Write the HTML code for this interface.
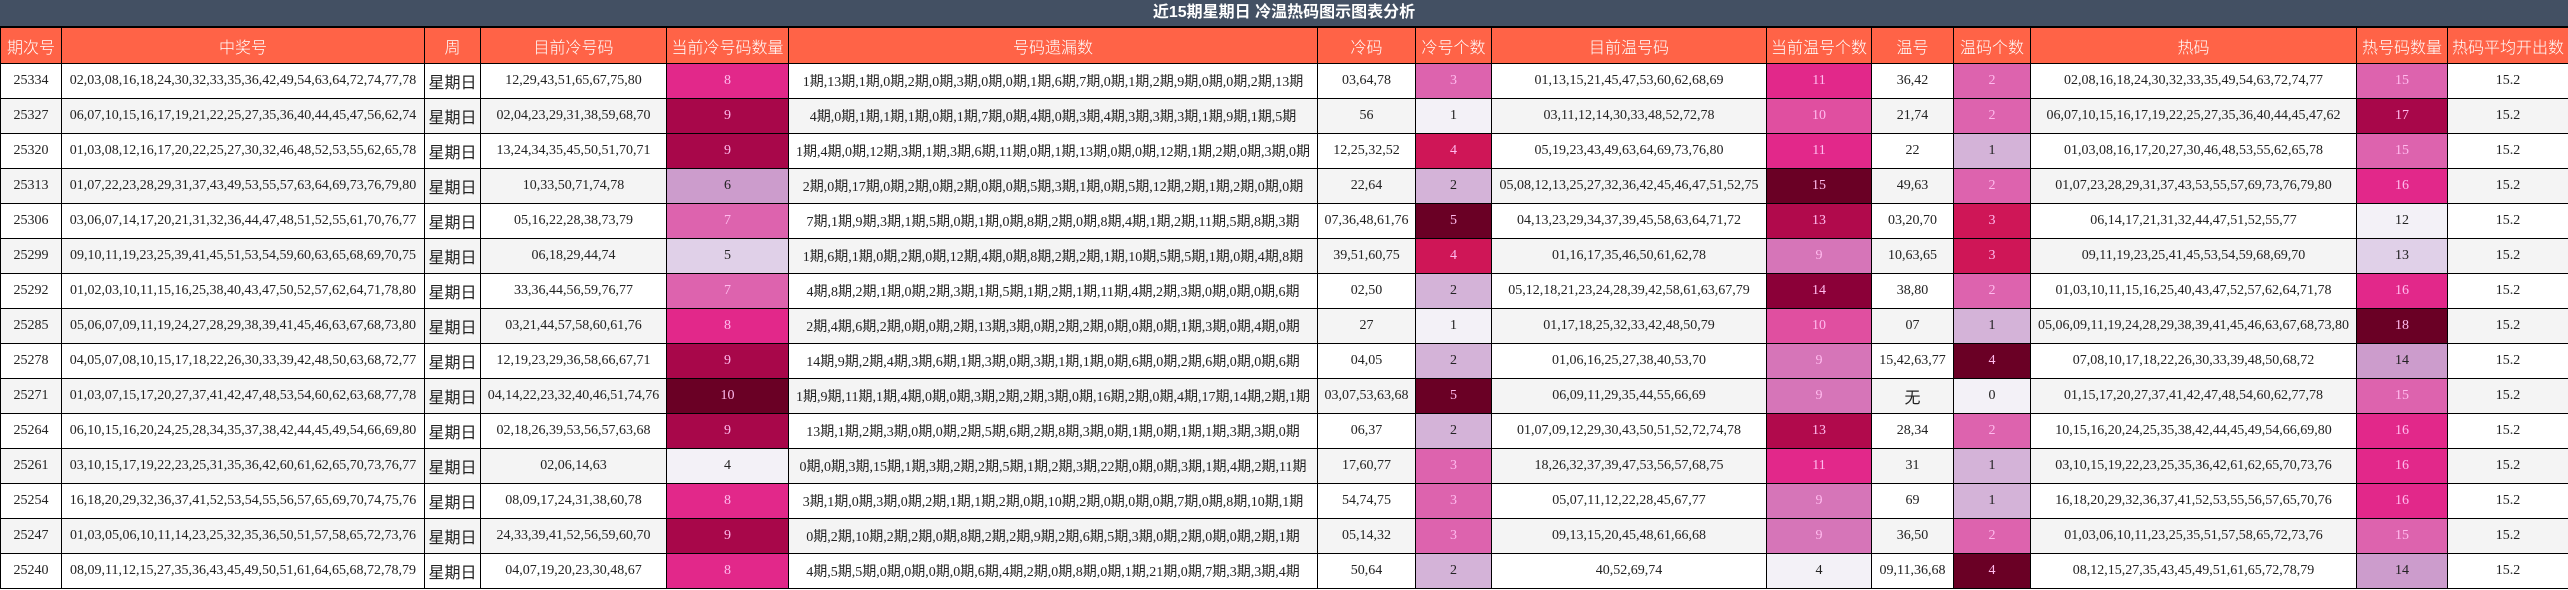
<!DOCTYPE html>
<html><head><meta charset="utf-8"><style>
html,body{margin:0;padding:0;width:2568px;height:590px;overflow:hidden;background:#fff}
.t{height:26px;background:#435063;border-bottom:2px solid #000;color:#fff;font:bold 16px "Liberation Sans","Noto Sans CJK SC",sans-serif;text-align:center;line-height:26px}
table{border-collapse:collapse;table-layout:fixed;width:2568px}
th{background:#ff6347;color:#fff;font:300 16px "Liberation Sans","Noto Sans CJK SC",sans-serif;height:35px;border:1px solid #000;border-top:none;padding:0;white-space:nowrap;overflow:hidden}
td{height:34px;border:1px solid #000;padding:0;text-align:center;font:14px "Liberation Serif","Noto Sans CJK SC",serif;color:#222;white-space:nowrap;overflow:hidden}
tr:nth-child(odd) td{background:#f4f4f4}
tr:nth-child(even) td{background:#fff}
td.w{font:16px "Liberation Sans","Noto Sans CJK SC",sans-serif}
tr td.A{background:#dd63ae;color:#fbe}
tr td.B{background:#f3f1f7;color:#222}
tr td.C{background:#cf1657;color:#fbe}
tr td.D{background:#d4b3d8;color:#222}
tr td.E{background:#6a0025;color:#fbe}
tr td.F{background:#e2288a;color:#fbe}
tr td.G{background:#e04fa0;color:#fbe}
tr td.H{background:#b10a4c;color:#fbe}
tr td.I{background:#8b0038;color:#fbe}
tr td.J{background:#d675b8;color:#fbe}
tr td.K{background:#e0d0e8;color:#222}
tr td.L{background:#cc9ccc;color:#222}
tr td.M{background:#a8074a;color:#fbe}
</style></head><body>
<div class="t">近15期星期日 冷温热码图示图表分析</div>
<table>
<colgroup><col style="width:61px"><col style="width:363px"><col style="width:56px"><col style="width:186px"><col style="width:122px"><col style="width:529px"><col style="width:98px"><col style="width:76px"><col style="width:275px"><col style="width:105px"><col style="width:82px"><col style="width:77px"><col style="width:326px"><col style="width:91px"><col style="width:121px"></colgroup>
<tr><th>期次号</th><th>中奖号</th><th>周</th><th>目前冷号码</th><th>当前冷号码数量</th><th>号码遗漏数</th><th>冷码</th><th>冷号个数</th><th>目前温号码</th><th>当前温号个数</th><th>温号</th><th>温码个数</th><th>热码</th><th>热号码数量</th><th>热码平均开出数</th></tr>
<tr><td>25334</td><td>02,03,08,16,18,24,30,32,33,35,36,42,49,54,63,64,72,74,77,78</td><td class="w">星期日</td><td>12,29,43,51,65,67,75,80</td><td class="F">8</td><td>1期,13期,1期,0期,2期,0期,3期,0期,0期,1期,6期,7期,0期,1期,2期,9期,0期,0期,2期,13期</td><td>03,64,78</td><td class="A">3</td><td>01,13,15,21,45,47,53,60,62,68,69</td><td class="F">11</td><td>36,42</td><td class="A">2</td><td>02,08,16,18,24,30,32,33,35,49,54,63,72,74,77</td><td class="A">15</td><td>15.2</td></tr>
<tr><td>25327</td><td>06,07,10,15,16,17,19,21,22,25,27,35,36,40,44,45,47,56,62,74</td><td class="w">星期日</td><td>02,04,23,29,31,38,59,68,70</td><td class="M">9</td><td>4期,0期,1期,1期,1期,0期,1期,7期,0期,4期,0期,3期,4期,3期,3期,3期,1期,9期,1期,5期</td><td>56</td><td class="B">1</td><td>03,11,12,14,30,33,48,52,72,78</td><td class="G">10</td><td>21,74</td><td class="A">2</td><td>06,07,10,15,16,17,19,22,25,27,35,36,40,44,45,47,62</td><td class="M">17</td><td>15.2</td></tr>
<tr><td>25320</td><td>01,03,08,12,16,17,20,22,25,27,30,32,46,48,52,53,55,62,65,78</td><td class="w">星期日</td><td>13,24,34,35,45,50,51,70,71</td><td class="M">9</td><td>1期,4期,0期,12期,3期,1期,3期,6期,11期,0期,1期,13期,0期,0期,12期,1期,2期,0期,3期,0期</td><td>12,25,32,52</td><td class="C">4</td><td>05,19,23,43,49,63,64,69,73,76,80</td><td class="F">11</td><td>22</td><td class="D">1</td><td>01,03,08,16,17,20,27,30,46,48,53,55,62,65,78</td><td class="A">15</td><td>15.2</td></tr>
<tr><td>25313</td><td>01,07,22,23,28,29,31,37,43,49,53,55,57,63,64,69,73,76,79,80</td><td class="w">星期日</td><td>10,33,50,71,74,78</td><td class="L">6</td><td>2期,0期,17期,0期,2期,0期,2期,0期,0期,5期,3期,1期,0期,5期,12期,2期,1期,2期,0期,0期</td><td>22,64</td><td class="D">2</td><td>05,08,12,13,25,27,32,36,42,45,46,47,51,52,75</td><td class="E">15</td><td>49,63</td><td class="A">2</td><td>01,07,23,28,29,31,37,43,53,55,57,69,73,76,79,80</td><td class="F">16</td><td>15.2</td></tr>
<tr><td>25306</td><td>03,06,07,14,17,20,21,31,32,36,44,47,48,51,52,55,61,70,76,77</td><td class="w">星期日</td><td>05,16,22,28,38,73,79</td><td class="A">7</td><td>7期,1期,9期,3期,1期,5期,0期,1期,0期,8期,2期,0期,8期,4期,1期,2期,11期,5期,8期,3期</td><td>07,36,48,61,76</td><td class="E">5</td><td>04,13,23,29,34,37,39,45,58,63,64,71,72</td><td class="H">13</td><td>03,20,70</td><td class="C">3</td><td>06,14,17,21,31,32,44,47,51,52,55,77</td><td class="B">12</td><td>15.2</td></tr>
<tr><td>25299</td><td>09,10,11,19,23,25,39,41,45,51,53,54,59,60,63,65,68,69,70,75</td><td class="w">星期日</td><td>06,18,29,44,74</td><td class="K">5</td><td>1期,6期,1期,0期,2期,0期,12期,4期,0期,8期,2期,2期,1期,10期,5期,5期,1期,0期,4期,8期</td><td>39,51,60,75</td><td class="C">4</td><td>01,16,17,35,46,50,61,62,78</td><td class="J">9</td><td>10,63,65</td><td class="C">3</td><td>09,11,19,23,25,41,45,53,54,59,68,69,70</td><td class="K">13</td><td>15.2</td></tr>
<tr><td>25292</td><td>01,02,03,10,11,15,16,25,38,40,43,47,50,52,57,62,64,71,78,80</td><td class="w">星期日</td><td>33,36,44,56,59,76,77</td><td class="A">7</td><td>4期,8期,2期,1期,0期,2期,3期,1期,5期,1期,2期,1期,11期,4期,2期,3期,0期,0期,0期,6期</td><td>02,50</td><td class="D">2</td><td>05,12,18,21,23,24,28,39,42,58,61,63,67,79</td><td class="I">14</td><td>38,80</td><td class="A">2</td><td>01,03,10,11,15,16,25,40,43,47,52,57,62,64,71,78</td><td class="F">16</td><td>15.2</td></tr>
<tr><td>25285</td><td>05,06,07,09,11,19,24,27,28,29,38,39,41,45,46,63,67,68,73,80</td><td class="w">星期日</td><td>03,21,44,57,58,60,61,76</td><td class="F">8</td><td>2期,4期,6期,2期,0期,0期,2期,13期,3期,0期,2期,2期,0期,0期,0期,1期,3期,0期,4期,0期</td><td>27</td><td class="B">1</td><td>01,17,18,25,32,33,42,48,50,79</td><td class="G">10</td><td>07</td><td class="D">1</td><td>05,06,09,11,19,24,28,29,38,39,41,45,46,63,67,68,73,80</td><td class="E">18</td><td>15.2</td></tr>
<tr><td>25278</td><td>04,05,07,08,10,15,17,18,22,26,30,33,39,42,48,50,63,68,72,77</td><td class="w">星期日</td><td>12,19,23,29,36,58,66,67,71</td><td class="M">9</td><td>14期,9期,2期,4期,3期,6期,1期,3期,0期,3期,1期,1期,0期,6期,0期,2期,6期,0期,0期,6期</td><td>04,05</td><td class="D">2</td><td>01,06,16,25,27,38,40,53,70</td><td class="J">9</td><td>15,42,63,77</td><td class="E">4</td><td>07,08,10,17,18,22,26,30,33,39,48,50,68,72</td><td class="L">14</td><td>15.2</td></tr>
<tr><td>25271</td><td>01,03,07,15,17,20,27,37,41,42,47,48,53,54,60,62,63,68,77,78</td><td class="w">星期日</td><td>04,14,22,23,32,40,46,51,74,76</td><td class="E">10</td><td>1期,9期,11期,1期,4期,0期,0期,3期,2期,2期,3期,0期,16期,2期,0期,4期,17期,14期,2期,1期</td><td>03,07,53,63,68</td><td class="E">5</td><td>06,09,11,29,35,44,55,66,69</td><td class="J">9</td><td class="w">无</td><td class="B">0</td><td>01,15,17,20,27,37,41,42,47,48,54,60,62,77,78</td><td class="A">15</td><td>15.2</td></tr>
<tr><td>25264</td><td>06,10,15,16,20,24,25,28,34,35,37,38,42,44,45,49,54,66,69,80</td><td class="w">星期日</td><td>02,18,26,39,53,56,57,63,68</td><td class="M">9</td><td>13期,1期,2期,3期,0期,0期,2期,5期,6期,2期,8期,3期,0期,1期,0期,1期,1期,3期,3期,0期</td><td>06,37</td><td class="D">2</td><td>01,07,09,12,29,30,43,50,51,52,72,74,78</td><td class="H">13</td><td>28,34</td><td class="A">2</td><td>10,15,16,20,24,25,35,38,42,44,45,49,54,66,69,80</td><td class="F">16</td><td>15.2</td></tr>
<tr><td>25261</td><td>03,10,15,17,19,22,23,25,31,35,36,42,60,61,62,65,70,73,76,77</td><td class="w">星期日</td><td>02,06,14,63</td><td class="B">4</td><td>0期,0期,3期,15期,1期,3期,2期,2期,5期,1期,2期,3期,22期,0期,0期,3期,1期,4期,2期,11期</td><td>17,60,77</td><td class="A">3</td><td>18,26,32,37,39,47,53,56,57,68,75</td><td class="F">11</td><td>31</td><td class="D">1</td><td>03,10,15,19,22,23,25,35,36,42,61,62,65,70,73,76</td><td class="F">16</td><td>15.2</td></tr>
<tr><td>25254</td><td>16,18,20,29,32,36,37,41,52,53,54,55,56,57,65,69,70,74,75,76</td><td class="w">星期日</td><td>08,09,17,24,31,38,60,78</td><td class="F">8</td><td>3期,1期,0期,3期,0期,2期,1期,1期,2期,0期,10期,2期,0期,0期,0期,7期,0期,8期,10期,1期</td><td>54,74,75</td><td class="A">3</td><td>05,07,11,12,22,28,45,67,77</td><td class="J">9</td><td>69</td><td class="D">1</td><td>16,18,20,29,32,36,37,41,52,53,55,56,57,65,70,76</td><td class="F">16</td><td>15.2</td></tr>
<tr><td>25247</td><td>01,03,05,06,10,11,14,23,25,32,35,36,50,51,57,58,65,72,73,76</td><td class="w">星期日</td><td>24,33,39,41,52,56,59,60,70</td><td class="M">9</td><td>0期,2期,10期,2期,2期,0期,8期,2期,2期,9期,2期,6期,5期,3期,0期,2期,0期,0期,2期,1期</td><td>05,14,32</td><td class="A">3</td><td>09,13,15,20,45,48,61,66,68</td><td class="J">9</td><td>36,50</td><td class="A">2</td><td>01,03,06,10,11,23,25,35,51,57,58,65,72,73,76</td><td class="A">15</td><td>15.2</td></tr>
<tr><td>25240</td><td>08,09,11,12,15,27,35,36,43,45,49,50,51,61,64,65,68,72,78,79</td><td class="w">星期日</td><td>04,07,19,20,23,30,48,67</td><td class="F">8</td><td>4期,5期,5期,0期,0期,0期,0期,6期,4期,2期,0期,8期,0期,1期,21期,0期,7期,3期,3期,4期</td><td>50,64</td><td class="D">2</td><td>40,52,69,74</td><td class="B">4</td><td>09,11,36,68</td><td class="E">4</td><td>08,12,15,27,35,43,45,49,51,61,65,72,78,79</td><td class="L">14</td><td>15.2</td></tr>
</table>
</body></html>
